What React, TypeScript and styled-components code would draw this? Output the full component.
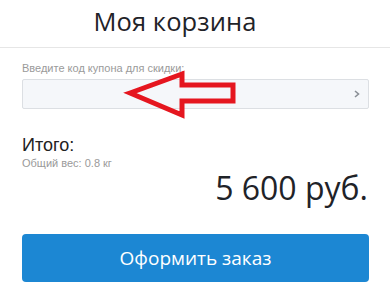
import React from "react";
import styled, { createGlobalStyle } from "styled-components";

const Global = createGlobalStyle`
  html, body { margin: 0; padding: 0; background: #fff; }
  body { width: 390px; height: 300px; overflow: hidden; }
  * { box-sizing: border-box; }
`;

const Page = styled.div`
  width: 390px;
  height: 300px;
  display: flex;
  flex-direction: column;
  background: #fff;
`;

const Header = styled.header`
  height: 48px;
  border-bottom: 1px solid #e6e6e6;
  display: flex;
  justify-content: center;
  align-items: flex-start;
  padding-right: 40px;
`;

const Title = styled.h1`
  margin: 0;
  padding-top: 3px;
  font-family: "Open Sans", sans-serif;
  font-weight: 400;
  font-size: 25.5px;
  line-height: 36px;
  color: #1f2328;
  letter-spacing: 0.1px;
`;

const Body = styled.div`
  padding: 13px 21px 0 22px;
  display: flex;
  flex-direction: column;
`;

const Coupon = styled.div`
  position: relative;
  display: flex;
  flex-direction: column;
`;

const Label = styled.label`
  font-family: "Liberation Sans", Arial, sans-serif;
  font-size: 11px;
  line-height: 14px;
  color: #9a9a9a;
  margin-bottom: 4px;
`;

const Field = styled.div`
  height: 30px;
  border: 1px solid #dcdfe3;
  border-radius: 2px;
  background: #f5f7fa;
  display: flex;
  align-items: center;
  justify-content: flex-end;
  padding-right: 8px;
`;

const Chevron = styled.svg`
  width: 6px;
  height: 8px;
`;

const Arrow = styled.svg`
  position: absolute;
  left: 98px;
  top: 0;
  width: 220px;
  height: 60px;
  pointer-events: none;
  overflow: visible;
`;

const Totals = styled.div`
  margin-top: 26px;
  display: flex;
  flex-direction: column;
`;

const TotalLabel = styled.div`
  font-family: "Liberation Sans", Arial, sans-serif;
  font-size: 18px;
  line-height: 20px;
  color: #222;
`;

const Weight = styled.div`
  font-family: "Liberation Sans", Arial, sans-serif;
  font-size: 11px;
  line-height: 14px;
  color: #9a9a9a;
  margin-top: 1px;
`;

const Price = styled.div`
  align-self: flex-end;
  font-family: "Open Sans", sans-serif;
  font-size: 32px;
  line-height: 40px;
  color: #1f2328;
  margin-top: -2px;
  margin-right: 1px;
`;

const Button = styled.button`
  margin-top: 26px;
  height: 48px;
  width: 347px;
  border: none;
  border-radius: 4px;
  background: #1c87d3;
  color: #fff;
  font-family: "Open Sans", sans-serif;
  font-size: 19px;
  cursor: pointer;
`;

export default function App() {
  return (
    <Page>
      <Global />
      <Header>
        <Title>Моя корзина</Title>
      </Header>
      <Body>
        <Coupon>
          <Label>Введите код купона для скидки:</Label>
          <Field>
            <Chevron viewBox="0 0 6 8">
              <path d="M1 1 L4.5 4 L1 7" fill="none" stroke="#8a8f96" strokeWidth="1.6" />
            </Chevron>
          </Field>
          <Arrow viewBox="98 0 220 60">
            <polygon
              points="108,32 160,13 160,24 211,24 211,40 160,40 160,54"
              fill="none"
              stroke="#e5161f"
              strokeWidth="5"
              strokeLinejoin="miter"
              strokeMiterlimit={6}
            />
          </Arrow>
        </Coupon>
        <Totals>
          <TotalLabel>Итого:</TotalLabel>
          <Weight>Общий вес: 0.8 кг</Weight>
          <Price>5 600 руб.</Price>
        </Totals>
        <Button>Оформить заказ</Button>
      </Body>
    </Page>
  );
}
